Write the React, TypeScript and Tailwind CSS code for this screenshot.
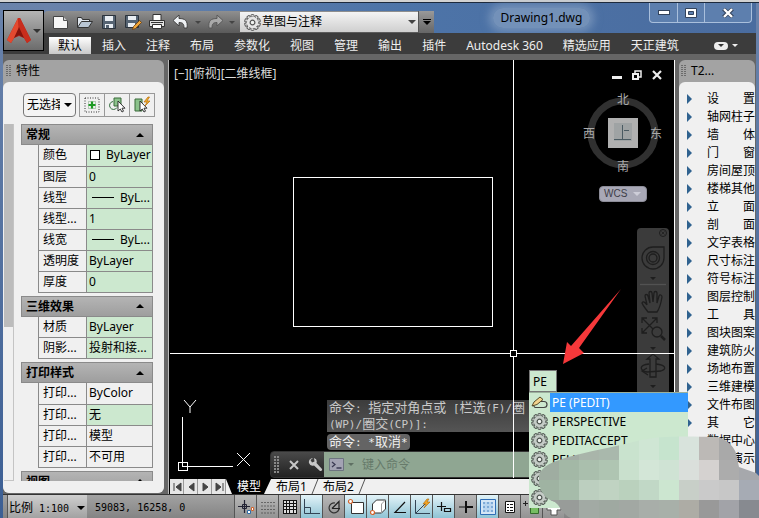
import { useState } from 'react'
import type { ReactNode } from 'react'

const RIBBON_TABS = [
  '默认', '插入', '注释', '布局', '参数化', '视图', '管理', '输出', '插件', 'Autodesk 360', '精选应用', '天正建筑',
]

type Row = { label: string; value: string; kind?: 'swatch' | 'line'; plain?: boolean }

const SECTIONS: { title: string; rows: Row[] }[] = [
  {
    title: '常规',
    rows: [
      { label: '颜色', value: 'ByLayer', kind: 'swatch' },
      { label: '图层', value: '0' },
      { label: '线型', value: 'ByL...', kind: 'line' },
      { label: '线型...', value: '1' },
      { label: '线宽', value: 'ByL...', kind: 'line' },
      { label: '透明度', value: 'ByLayer' },
      { label: '厚度', value: '0' },
    ],
  },
  {
    title: '三维效果',
    rows: [
      { label: '材质', value: 'ByLayer' },
      { label: '阴影...', value: '投射和接...' },
    ],
  },
  {
    title: '打印样式',
    rows: [
      { label: '打印...', value: 'ByColor', plain: true },
      { label: '打印...', value: '无' },
      { label: '打印...', value: '模型', plain: true },
      { label: '打印...', value: '不可用', plain: true },
    ],
  },
  { title: '视图', rows: [] },
]

// Two-character names are spread to the width of four with ideographic spaces.
const TARCH_MENU = [
  '设　　置', '轴网柱子', '墙　　体', '门　　窗', '房间屋顶', '楼梯其他', '立　　面', '剖　　面',
  '文字表格', '尺寸标注', '符号标注', '图层控制', '工　　具', '图块图案', '建筑防火', '场地布置',
  '三维建模', '文件布图', '其　　它', '数据中心', '帮助演示',
]

const SUGGESTIONS = ['PE (PEDIT)', 'PERSPECTIVE', 'PEDITACCEPT', 'PELLIPSE', '', '']

const MOSAIC = [
  ['#a0a8a2', '#a3ada5', '#a9b5aa', '#a9b8ac', '#c9e3ce', '#cfe6d4', '#c6e4ce', '#d8e3dc', '#bcb9b6', '#a9a9a9', '#a5a5a5'],
  ['#9fada1', '#a3b8a6', '#aabfad', '#afc5b2', '#c9e0cd', '#d3e6d7', '#cfe3d4', '#dadfdb', '#d5d2d0', '#acacac', '#a6a8ac'],
  ['#9fb3a2', '#a6bcaa', '#bccfbf', '#c0d3c2', '#bad1bd', '#c1d8c6', '#cce6d0', '#c8cfc8', '#cacaca', '#c7c7c7', '#a6abb4'],
  ['#9b9f9c', '#989c99', '#a2aaa4', '#9fa9a1', '#a2a8a3', '#a8aea9', '#a8b0a9', '#adaca5', '#999999', '#a2a3a8', '#878a90'],
]

const Svg = ({ w = 18, h = 18, children }: { w?: number; h?: number; children: ReactNode }) => (
  <svg width={w} height={h} viewBox={`0 0 ${w} ${h}`} fill="none" className="block shrink-0">
    {children}
  </svg>
)

const Caret = ({ color = '#222', w = 8 }: { color?: string; w?: number }) => (
  <svg width={w} height={w / 2} viewBox="0 0 8 4" className="block shrink-0">
    <path d="M0 0h8L4 4z" fill={color} />
  </svg>
)

function Gear({ size = 17, fill = '#c4cbc6', stroke = '#4c534e' }) {
  const teeth = Array.from({ length: 10 }, (_, i) => i * 36)
  return (
    <svg width={size} height={size} viewBox="-10 -10 20 20" className="block shrink-0">
      {teeth.map((a) => (
        <rect key={a} x="-1.8" y="-9.3" width="3.6" height="4" rx="0.8" fill={fill} stroke={stroke} strokeWidth="1.1" transform={`rotate(${a})`} />
      ))}
      <circle r="6.8" fill={fill} stroke={stroke} strokeWidth="1" strokeDasharray="1.7 2.57" />
      <circle r="6.4" fill={fill} />
      <circle r="2.8" fill="#f1f4f1" stroke={stroke} strokeWidth="1.4" />
    </svg>
  )
}

const QUICK_ICONS: { name: string; icon: ReactNode }[] = [
  {
    name: '新建',
    icon: (
      <Svg>
        <path d="M1.5 3.5h10l4 4v8h-14z" fill="#f6f6f6" stroke="#444" />
        <path d="M11.5 3.5v4h4" fill="#ccc" stroke="#555" />
      </Svg>
    ),
  },
  {
    name: '打开',
    icon: (
      <Svg>
        <path d="M1.5 14.5v-10h4l1 2h7v3" fill="#dfe6ee" stroke="#333" />
        <path d="M1.5 14.5l4-6h11l-4 6z" fill="#b9c6d4" stroke="#333" />
      </Svg>
    ),
  },
  {
    name: '保存',
    icon: (
      <Svg>
        <path d="M2.5 2.5h13v13h-13z" fill="#566473" stroke="#2b333c" />
        <path d="M5 3h8v5H5zM5 11h8v4H5z" fill="#e9eef3" />
        <path d="M6 12h3v3H6z" fill="#566473" />
      </Svg>
    ),
  },
  {
    name: '另存为',
    icon: (
      <Svg>
        <path d="M1.5 2.5h13v12h-13z" fill="#566473" stroke="#2b333c" />
        <path d="M4 3h8v4H4zM4 10h7v4H4z" fill="#e9eef3" />
        <path d="M8.5 16.5l1-3 6-6 2 2-6 6z" fill="#f0a63a" stroke="#6b3d0c" strokeWidth="0.8" />
      </Svg>
    ),
  },
  {
    name: '打印',
    icon: (
      <Svg>
        <path d="M5 7.5V1.5h8v6" fill="#fff" stroke="#333" />
        <path d="M1.5 7.5h15v6h-15z" fill="#e4e4e4" stroke="#333" />
        <path d="M4.5 11.5h9v4h-9z" fill="#fff" stroke="#333" />
        <path d="M3 9.5h12" stroke="#333" />
      </Svg>
    ),
  },
]

function QuickAccess() {
  return (
    <div className="mt-2 flex h-[22px] items-center rounded-tl bg-linear-to-b from-[#8f8f8f] to-[#5a5a5a] pl-2">
      <div className="flex items-center gap-[6px]">
        {QUICK_ICONS.map((q) => (
          <button key={q.name} aria-label={q.name}>{q.icon}</button>
        ))}
        <button aria-label="放弃">
          <Svg>
            <path d="M1 7.5l6-5.5v3.5c6 0 9 2 8 9.5h-3c0-4-1-5.5-5-5.5v3.5z" fill="#eef1f4" stroke="#3a3a3a" strokeWidth="0.9" />
          </Svg>
        </button>
      </div>
      <span className="px-[5px]"><Caret color="#444" w={6} /></span>
      <button aria-label="重做">
        <Svg>
          <path d="M17 7.5l-6-5.5v3.5c-6 0-9 2-8 9.5h3c0-4 1-5.5 5-5.5v3.5z" fill="#a9a9a9" stroke="#555" strokeWidth="0.9" />
        </Svg>
      </button>
      <span className="px-[5px]"><Caret color="#444" w={6} /></span>
      <label className="relative flex h-5 w-[178px] items-center bg-linear-to-b from-[#f4f4f4] to-[#cfcfcf] pl-1">
        <Gear fill="#e6e6e6" stroke="#555" />
        <select aria-label="工作空间" className="ml-px w-full appearance-none bg-transparent text-xs text-black">
          <option>草图与注释</option>
        </select>
        <span className="absolute right-[2px]"><Caret color="#444" w={8} /></span>
      </label>
      <button aria-label="自定义快速访问工具栏" className="flex h-[22px] w-4 flex-col items-center justify-center gap-px border-l border-[#555] bg-linear-to-b from-[#999] to-[#666]">
        <span className="h-px w-2 bg-black" />
        <Caret color="#000" w={8} />
      </button>
    </div>
  )
}

function WindowButtons() {
  return (
    <div className="mr-1 flex h-5 overflow-hidden rounded-b border border-t-0 border-[#a9bfdc] bg-[#5d7fae]">
      <button aria-label="最小化" className="flex w-7 items-center justify-center border-r border-[#a9bfdc]">
        <span className="h-[5px] w-3 border border-[#33435c] bg-white" />
      </button>
      <button aria-label="最大化" className="flex w-[27px] items-center justify-center border-r border-[#a9bfdc]">
        <Svg w={12} h={10}>
          <path d="M.5.5h11v9H.5z" fill="#fff" stroke="#33435c" />
          <path d="M3.5 3.5h5v3h-5z" fill="#5d7fae" stroke="#33435c" />
        </Svg>
      </button>
      <button aria-label="关闭" className="flex w-[46px] items-center justify-center">
        <Svg w={12} h={10}>
          <path d="M1.5 1l9 8M10.5 1l-9 8" stroke="#33435c" strokeWidth="4" />
          <path d="M2 1l8 8M10 1L2 9" stroke="#fff" strokeWidth="2.4" />
        </Svg>
      </button>
    </div>
  )
}

function Header() {
  const [active, setActive] = useState('默认')
  return (
    <header className="flex shrink-0">
      <div className="border-b-[3px] border-[#3c3c3c] pt-[7px]">
        <button aria-label="应用程序菜单" className="flex size-[41px] items-center justify-center gap-[2px] border border-black bg-linear-to-b from-[#b5b5b5] to-[#6c6c6c]">
          <Svg w={24} h={28}>
            <path d="M11 1h2l11 22-4 3-3-5-5-2-5 2-3 5-4-3z" fill="#b5241a" />
            <path d="M11 1L0 23l4 3 3-5 5-8z" fill="#e4492f" />
            <path d="M11 1l1 12 5 8 3 5 4-3L13 1z" fill="#c92d1d" />
            <path d="M12 10l-5 11 5-3 5 3z" fill="#84140d" />
          </Svg>
          <Caret color="#333" w={8} />
        </button>
      </div>
      <div className="flex min-w-0 flex-1 flex-col">
        <div className="flex h-[30px] items-start bg-linear-to-r from-[#6a83ab] via-[#4d74a8] to-[#4a6c9f]">
          <QuickAccess />
          <div className="flex h-[30px] flex-1 items-center justify-center">
            <h1 className="rounded-full bg-[#8ea6c6]/60 px-2 text-xs leading-5 text-black shadow-[0_0_8px_4px_rgba(142,166,198,0.6)]">
              Drawing1.dwg
            </h1>
          </div>
          <WindowButtons />
        </div>
        <nav className="flex h-[21px] items-end gap-[2px] bg-[#3c3c3c] pl-[5px] text-xs text-[#eee]">
          {RIBBON_TABS.map((t) => (
            <button
              key={t}
              onClick={() => setActive(t)}
              className={
                t === active
                  ? 'h-[17px] bg-linear-to-b from-white to-[#c9c9c9] px-[9px] leading-4 whitespace-nowrap text-black'
                  : 'h-[17px] px-[9px] leading-4 whitespace-nowrap'
              }
            >
              {t}
            </button>
          ))}
          <button aria-label="最小化功能区" className="ml-6 flex h-[17px] items-center gap-1">
            <span className="flex h-2 w-[14px] items-center justify-center rounded-sm bg-[#eee]"><Caret color="#333" w={6} /></span>
            <Caret color="#eee" w={6} />
          </button>
        </nav>
      </div>
    </header>
  )
}

const Grip = () => (
  <svg width="5" height="12" viewBox="0 0 5 12" className="block shrink-0">
    <path d="M1 0v12M4 0v12" stroke="#333" strokeDasharray="1 1" />
  </svg>
)

function Section({ title, rows }: { title: string; rows: Row[] }) {
  return (
    <section className="mb-[3px]">
      <button className="flex h-[21px] w-full items-center justify-between border border-[#8a8a8a] bg-linear-to-b from-[#b4b4b4] to-[#9e9e9e] px-1 pr-2 text-xs leading-[19px] font-bold text-black">
        {title}
        <span className="rotate-180"><Caret color="#000" w={8} /></span>
      </button>
      {rows.length > 0 && (
        <div className="pl-[17px]">
          <table className="w-full table-fixed border-collapse text-xs">
            <tbody>
              {rows.map((r, i) => (
                <tr key={i} className="h-[21px]">
                  <th className="w-12 border border-t-0 border-[#8a8a8a] p-0 pl-1 text-left leading-5 font-normal whitespace-nowrap">{r.label}</th>
                  <td className={r.plain ? 'border border-t-0 border-[#8a8a8a] p-0 pl-[2px] leading-5' : 'border border-t-0 border-[#8a8a8a] bg-[#cce8cf] p-0 pl-[2px] leading-5'}>
                    <div className="flex items-center overflow-hidden whitespace-nowrap">
                      {r.kind === 'swatch' && <span className="mr-[6px] ml-px size-[10px] border border-black bg-white" />}
                      {r.kind === 'line' && <span className="mr-[6px] ml-[3px] h-px w-[22px] bg-black" />}
                      {r.value}
                    </div>
                  </td>
                </tr>
              ))}
            </tbody>
          </table>
        </div>
      )}
    </section>
  )
}

function Properties() {
  return (
    <aside className="flex w-[161px] shrink-0 flex-col overflow-hidden rounded-md bg-[#a3a3a3]">
      <div className="flex h-[22px] shrink-0 items-center gap-[5px] pl-[3px] text-xs">
        <Grip />
        <h2>特性</h2>
      </div>
      <div className="flex min-h-0 flex-1 flex-col rounded-t-md bg-[#f0f0f0] pb-3">
        <div className="flex h-[42px] shrink-0 items-center gap-[3px] pt-1 pl-5">
          <label className="relative flex h-6 w-[53px] items-center rounded-sm border border-[#777] bg-[#f4f4f4]">
            <select aria-label="选择对象" className="w-9 appearance-none overflow-hidden pl-[3px] text-xs">
              <option>无选择</option>
            </select>
            <span className="absolute right-[3px]"><Caret color="#000" w={8} /></span>
          </label>
          <div className="flex">
            <button aria-label="切换 PICKADD" className="flex h-6 w-[26px] items-center justify-center border border-[#999]">
              <Svg>
                <path d="M2 2h14v14H2z" stroke="#333" strokeDasharray="1 1.5" />
                <path d="M5.5 5.5h7v7h-7z" stroke="#7aa27a" strokeDasharray="1 1" />
                <path d="M9 5.5v7M5.5 9h7" stroke="#1d9a24" strokeWidth="2.2" />
              </Svg>
            </button>
            <button aria-label="选择对象" className="-ml-px flex h-6 w-[26px] items-center justify-center border border-[#999]">
              <Svg>
                <path d="M6 2h7v8H6z" fill="#8cc28c" stroke="#386b38" />
                <path d="M5 5.5a4 4 0 1 0 4 6" stroke="#2f6a3a" />
                <path d="M10 5v10l2.3-2 1.7 3 1.5-.8-1.5-3h3z" fill="#fff" stroke="#222" strokeWidth="0.9" />
              </Svg>
            </button>
            <button aria-label="快速选择" className="-ml-px flex h-6 w-[26px] items-center justify-center border border-[#999]">
              <Svg>
                <path d="M2 3h7v12H2z" fill="#8cc28c" stroke="#386b38" />
                <path d="M7 5v10l2.3-2 1.7 3 1.5-.8-1.5-3h3z" fill="#fff" stroke="#222" strokeWidth="0.9" />
                <path d="M15 1l-4 5h3l-2 4 5-5h-3l2.5-4z" fill="#f5b02e" stroke="#b56b0a" strokeWidth="0.7" />
              </Svg>
            </button>
          </div>
        </div>
        <div className="flex min-h-0 flex-1 overflow-hidden">
          <div className="mr-[7px] ml-px flex w-[10px] shrink-0 flex-col border-r border-b border-[#c4c4c4]">
            <div className="h-[57%] bg-[#bcbcbc]" />
          </div>
          <div className="min-w-0 flex-1 pr-[11px]">
            {SECTIONS.map((s) => (
              <Section key={s.title} {...s} />
            ))}
          </div>
        </div>
      </div>
    </aside>
  )
}

function TArchMenu() {
  return (
    <aside className="flex w-[76px] shrink-0 flex-col overflow-hidden rounded-t-md bg-[#a3a3a3]">
      <div className="flex h-[22px] shrink-0 items-center gap-[5px] pl-[2px] text-xs">
        <Grip />
        <h2>T2...</h2>
      </div>
      <ul className="min-h-0 flex-1 overflow-hidden rounded-t-md bg-[#f0f0f0] pt-2 pl-2 text-xs">
        {TARCH_MENU.map((m) => (
          <li key={m}>
            <button className="flex h-[18px] items-center gap-[15px] leading-[18px] whitespace-nowrap">
              <svg width="5" height="10" viewBox="0 0 5 10" className="block"><path d="M0 0l5 5-5 5z" fill="#2f628f" /></svg>
              {m}
            </button>
          </li>
        ))}
      </ul>
    </aside>
  )
}

function NavBar() {
  return (
    <div className="absolute top-[168px] right-[5px] w-8 rounded-t bg-[#3b3b3b]">
      <svg width="32" height="168" viewBox="0 0 32 168" fill="none" stroke="#1e1e1e" strokeWidth="1.3" className="block">
        <circle cx="26" cy="5" r="3.5" strokeWidth="1" />
        <path d="M24.5 3.5l3 3M27.5 3.5l-3 3" strokeWidth="0.8" />
        <path d="M27 19v11a11 11 0 1 1-11-11z" />
        <circle cx="16" cy="30" r="6.5" />
        <circle cx="16" cy="30" r="4" />
        <path d="M13 49h6l-3 3zM13 119h6l-3 3zM13 157h6l-3 3z" fill="#1e1e1e" stroke="none" />
        <path d="M3 56.5h26" stroke="#525252" />
        <path d="M11 84c-2-3-5-6-6-9 1-2 3-1 5 2l-2-9c0-2 2.5-2 3 0l2 7-1-10c0-2 3-2 3 0l1 9 1-9c0-2 3-2 3 0v10l2-7c1-2 3-1 3 1-1 6-2 11-5 15z" />
        <path d="M5 90l17 17M20 90L5 105M5 95v-5h5M15 90h5v5M5 100v5h5" />
        <circle cx="20" cy="104" r="5" fill="#3b3b3b" />
        <path d="M24 108l4 4" strokeWidth="2.5" />
        <path d="M13 149v-18h-3l6-5 6 5h-3v18z" />
        <path d="M12 136c-10 1-10 6-2 8l14-1c6-2 5-6-5-7M10 140l-5 3 6 4" />
      </svg>
    </div>
  )
}

function ViewCube() {
  return (
    <div className="absolute top-8 right-[12px] h-[112px] w-20 text-xs text-[#aaa]">
      <svg width="80" height="80" viewBox="0 0 80 80" className="block">
        <circle cx="41" cy="41" r="32" fill="none" stroke="#303030" strokeWidth="7" />
        <path d="M26 26h30v30H26z" fill="#b0b0b0" />
        <path d="M32 31h18v18H32z" fill="#9fa3a4" />
        <path d="M40.5 33v14M42 38.5h5M32 47.5h17" stroke="#4a5a62" />
      </svg>
      <span className="absolute top-0 left-[35px] leading-4">北</span>
      <span className="absolute top-[34px] left-px leading-4">西</span>
      <span className="absolute top-[34px] right-0 leading-4">东</span>
      <span className="absolute top-[67px] left-[35px] leading-4">南</span>
      <button className="absolute top-[94px] left-[17px] flex h-4 w-12 items-center gap-[6px] rounded-sm border border-[#8d8d99] bg-[#a8a8b6] pl-1 font-['Liberation_Sans',sans-serif] text-[10px] text-[#3d3d48]">
        WCS
        <Caret color="#cdcdd8" w={8} />
      </button>
    </div>
  )
}

function CommandLine() {
  return (
    <div className="absolute right-2 bottom-0 left-[100px]">
      <div className="ml-[57px] font-['DejaVu_Sans_Mono','Noto_Sans_CJK_SC',monospace] text-[13px] leading-[15px] text-[#c9c9c9]">
        <p className="mb-[2px] w-[202px] bg-linear-to-b from-[#3c3c3c] to-[#555] pl-[2px] whitespace-nowrap">
          命令<span className="text-[11px]">: </span>指定对角点或<span className="text-[11px]"> [</span>栏选
          <span className="text-[11px]">(F)/</span>圈
          <br />
          <span className="text-[11px]">(WP)/</span>圈交<span className="text-[11px]">(CP)]:</span>
        </p>
        <p className="mb-px w-fit rounded-sm bg-[#646464] px-[2px] text-[#eee]">
          命令<span className="text-[11px]">: *</span>取消<span className="text-[11px]">*</span>
        </p>
      </div>
      <div className="flex h-[27px] overflow-hidden rounded-l border border-[#333] bg-linear-to-b from-[#4a4a4a] to-[#222]">
        <div className="flex w-[53px] shrink-0 items-center gap-[9px] pl-[3px]">
          <svg width="6" height="18" viewBox="0 0 6 18" className="block"><path d="M1 0v18M4 0v18" stroke="#888" strokeWidth="2" strokeDasharray="2 1" /></svg>
          <button aria-label="关闭命令行"><Svg w={10} h={10}><path d="M1 1l8 8M9 1L1 9" stroke="#c8c8c8" strokeWidth="2" /></Svg></button>
          <button aria-label="自定义">
            <Svg w={15} h={15}>
              <path d="M5 1a4 4 0 0 0-4 5 4 4 0 0 0 5 2.5l6 5.5c1.5.5 2.5-1 2-2L8.500 6A4 4 0 0 0 6 1l.5 3.5L4 5.5 2.500 3z" fill="#c8c8c8" />
            </Svg>
          </button>
        </div>
        <label className="flex min-w-0 flex-1 items-center bg-[#8fa692] pl-[5px]">
          <Svg w={15} h={14}>
            <path d="M.5.5h14v12H.5z" fill="#a3a3b4" stroke="#6d7480" />
            <path d="M3 4l3 2.500L3 9M7.500 10h5" stroke="#3c3c55" strokeWidth="1.3" />
          </Svg>
          <span className="ml-1"><Caret color="#5f7063" w={6} /></span>
          <input aria-label="命令" placeholder="键入命令" className="ml-2 min-w-0 flex-1 bg-transparent text-xs outline-none placeholder:text-[#667a6a]" />
        </label>
      </div>
    </div>
  )
}

function Autocomplete() {
  return (
    <div className="absolute top-[310px] left-[360px] z-20 w-[159px] text-xs text-black">
      <input aria-label="动态输入" defaultValue="PE" className="block h-[22px] w-7 border border-[#777] bg-[#cce8cf] pl-[3px] outline-none" />
      <ul className="border-t border-[#9ab09c] bg-[#cce8cf] pb-px">
        {SUGGESTIONS.map((s, i) => (
          <li key={i} className="flex h-[19px] items-center pl-[2px]">
            {i === 0 ? (
              <Svg w={17} h={17}>
                <path d="M5 13.500h8c4 0 4-6 0-6h-3M2 11l2 2.500h3" stroke="#444" strokeWidth="1.2" />
                <path d="M1 12l2-4 6-5 3 2.500-6 5z" fill="#f2d38e" stroke="#4a3a18" strokeWidth="0.9" />
              </Svg>
            ) : (
              <Gear />
            )}
            <span className={i === 0 ? 'ml-[2px] h-[19px] flex-1 bg-[#3399ff] pl-[2px] leading-[19px] text-white' : 'ml-[2px] flex-1 pl-[2px] leading-[19px]'}>{s}</span>
          </li>
        ))}
      </ul>
    </div>
  )
}

function Viewport() {
  return (
    <div className="relative min-h-0 flex-1 overflow-hidden bg-black">
      <p className="absolute top-[5px] left-1 text-xs leading-[18px] text-[#ddd]">[−][俯视][二维线框]</p>
      <div className="absolute top-[10px] right-3 flex items-center gap-[10px]">
        <button aria-label="最小化视口" className="mt-1 h-[3px] w-[10px] bg-[#eee]" />
        <button aria-label="还原视口">
          <Svg w={10} h={10}>
            <path d="M3 3V1h6v6H7" stroke="#eee" strokeWidth="1.5" />
            <path d="M1 4h5v5H1z" stroke="#eee" strokeWidth="2" />
          </Svg>
        </button>
        <button aria-label="关闭视口">
          <Svg w={10} h={10}><path d="M1 1l8 8M9 1L1 9" stroke="#eee" strokeWidth="2.2" /></Svg>
        </button>
      </div>
      <ViewCube />
      <NavBar />
      <CommandLine />
      <svg className="pointer-events-none absolute inset-0 size-full" fill="none" stroke="#fff" shapeRendering="crispEdges">
        <rect x="123.5" y="117.5" width="199" height="149" />
        <path d="M343.5 0v290M343.5 297v400M0 293.5h340M347 293.5h1200" />
        <rect x="340.5" y="290.5" width="6" height="6" />
        <path d="M12.5 357v49h50M8.5 402.5h9v8h-9z" />
        <g shapeRendering="auto">
          <path d="M14 340l6 7 6-7M20 347v6M67 393l13 13M80 393l-13 13" />
        </g>
      </svg>
      <svg width="60" height="80" viewBox="0 0 60 80" className="absolute top-[228px] left-[392px]">
        <path d="M59 1L17 60l5 5-21 11 4-22 4 4z" fill="#f5383a" />
      </svg>
    </div>
  )
}

const PAGE_ARROWS = ['M3 1v8M10 1L5 5l5 4z', 'M9 1L4 5l5 4z', 'M4 1l5 4-5 4z', 'M3 1l5 4-5 4zM10 1v8']

function LayoutTabs() {
  return (
    <div className="flex h-4 shrink-0 border-t border-black bg-[#f0f0f0] text-xs text-black">
      {PAGE_ARROWS.map((d, i) => (
        <button key={d} aria-label={`布局翻页 ${i + 1}`} className="flex w-[14px] items-center justify-center border-r border-[#999] bg-[#e6e6e6]">
          <Svg w={12} h={10}><path d={d} fill="#444" stroke="#444" /></Svg>
        </button>
      ))}
      <Svg w={8} h={15}><path d="M0 0h8v15H6z" fill="#000" /></Svg>
      <button className="bg-black px-[3px] leading-[15px] text-white">模型</button>
      <Svg w={8} h={15}><path d="M0 0h7L0 15z" fill="#000" /></Svg>
      <button className="px-1 leading-[15px]">布局1</button>
      <Svg w={8} h={15}><path d="M1 15L7 0" stroke="#555" /></Svg>
      <button className="px-1 leading-[15px]">布局2</button>
      <Svg w={8} h={15}><path d="M1 15L7 0" stroke="#555" /></Svg>
    </div>
  )
}

const TOGGLES: { name: string; on: boolean; icon: ReactNode }[] = [
  { name: '推断约束', on: false, icon: <><path d="M1 8.5h12M7.5 2v13" stroke="#223" strokeWidth="1.2" /><path d="M5.5 6.5h4v4h-4z" stroke="#223" /><path d="M10.5 12.5h3v3h-3z" stroke="#2f6da8" fill="#fff" /><path d="M14.5 9.5h2v3h-2z" stroke="#d2622a" fill="#fff" /></> },
  { name: '捕捉', on: false, icon: <path d="M3 4v12M6 4v12M9 4v12M12 4v12M15 4v12" stroke="#222" strokeDasharray="1 2.5" /> },
  { name: '栅格', on: false, icon: <><path d="M2 2h14v14H2z" fill="#ddd" /><path d="M2 2.5h14M2 5.5h14M2 8.5h14M2 11.5h14M2 15.5h14M2.5 2v14M5.5 2v14M8.5 2v14M12.5 2v14M15.5 2v14" stroke="#111" /></> },
  { name: '正交', on: true, icon: <path d="M1.5 1v14.5H17M1.5 9.5h6v6" stroke="#345" /> },
  { name: '极轴', on: false, icon: <><path d="M14 11a5 5 0 1 1-4-6" stroke="#333" strokeWidth="1.2" /><path d="M7 10.5h8M7 10.5l7-7v8" stroke="#222" strokeWidth="1.2" /></> },
  { name: '对象捕捉', on: true, icon: <><path d="M4.5 4.5h12v11h-12z" fill="#fff" stroke="#333" /><circle cx="3.5" cy="3.5" r="2" fill="#fff" stroke="#d2622a" strokeWidth="1.2" /></> },
  { name: '三维对象捕捉', on: true, icon: <><path d="M3.5 6l4-4h9v9l-4 4h-9z" fill="#fff" stroke="#333" /><path d="M12.5 6l4-4M12.5 6v9" stroke="#999" /><circle cx="3.5" cy="14.5" r="2" fill="#fff" stroke="#d2622a" strokeWidth="1.2" /></> },
  { name: '对象追踪', on: true, icon: <path d="M14 4L4 14.5h11" stroke="#111" strokeWidth="1.2" /> },
  { name: '动态 UCS', on: true, icon: <><path d="M2.5 2v13.5H17M3 15L12 6" stroke="#345" /><path d="M14 1l-4 5h3l-2 4 6-6h-3l2-3z" fill="#f5a623" stroke="#a6640c" strokeWidth="0.6" /></> },
  { name: '动态输入', on: true, icon: <path d="M2 8.500h9M6.500 4v9M9.500 10.500h6v3h-6z" stroke="#111" strokeWidth="1.2" /> },
  { name: '线宽', on: false, icon: <><path d="M2 9h8" stroke="#111" /><path d="M9 9h7M9 3v12" stroke="#111" strokeWidth="2" /></> },
  { name: '透明度', on: true, icon: <><path d="M1.5 1.5h15v15h-15z" fill="#d5e6f6" stroke="#2f6db5" /><path d="M4 4h10v10H4z" fill="#b9d5f0" /><path d="M4 5h10M4 9h10M4 13h10" stroke="#7fabd8" strokeWidth="2" strokeDasharray="2 2" /></> },
  { name: '快捷特性', on: false, icon: <><path d="M4.5 3.5h9v11h-9z" fill="#fff" stroke="#111" /><path d="M6 6.500h2M9 6.500h3M6 9.500h2M9 9.500h3M6 12.500h2M9 12.500h3" stroke="#111" /></> },
  { name: '选择循环', on: false, icon: <><path d="M0 5.500h5M2.500 3v5" stroke="#222" /><path d="M7.500 7.500h8v8h-8z" fill="#76bd62" stroke="#356b2a" /></> },
  { name: '注释监视器', on: false, icon: <path d="M6 2h6v5h4v5h-4v5H6v-5H2V7h4z" fill="#fff" stroke="#555" /> },
]

function StatusBar() {
  return (
    <footer className="flex h-[23px] shrink-0 bg-linear-to-b from-[#a2a2a2] to-[#848484] pl-1 text-xs text-black">
      <button className="flex w-20 items-center gap-2 border-l border-[#555] bg-linear-to-b from-[#cfcfcf] to-[#a2a2a2] pt-[2px] pl-px whitespace-nowrap">
        <span>
          比例<span className="ml-[6px] font-['DejaVu_Sans_Mono',monospace] text-[10px]">1:100</span>
        </span>
        <Caret color="#000" w={8} />
      </button>
      <output className="flex w-[147px] items-center pt-[2px] pl-2 font-['DejaVu_Sans_Mono',monospace] text-[10px] whitespace-nowrap">
        59083, 16258, 0
      </output>
      {TOGGLES.map((t) => (
        <button
          key={t.name}
          aria-label={t.name}
          aria-pressed={t.on}
          className={
            t.on
              ? 'flex w-[22px] items-center justify-center border-l border-[#555] bg-linear-to-b from-[#e2f3f8] to-[#8fc3d4]'
              : 'flex w-[22px] items-center justify-center border-l border-[#555] bg-linear-to-b from-[#b8b8b8] to-[#939393]'
          }
        >
          <Svg>{t.icon}</Svg>
        </button>
      ))}
    </footer>
  )
}

// Pixelated blot laid over the lower right corner of the window.
function Mosaic() {
  return (
    <svg width="220" height="82" viewBox="0 0 220 82" className="pointer-events-none absolute right-0 bottom-0 z-30">
      <clipPath id="blot">
        <path d="M0 39c4-10 14-13 26-17 24-7 50-11 76-18 18-4 42-4 76-3 8 1 16 8 19 16l3 14 17 6 3 3v42H32c-8-3-10-11-16-16C4 63-2 50 0 39z" />
      </clipPath>
      <g clipPath="url(#blot)" shapeRendering="crispEdges">
        {MOSAIC.map((row, r) =>
          row.map((c, i) => (
            <rect key={`${r}-${i}`} x={i * 20} y={r === 0 ? 0 : r * 20 + 4} width="20" height="24" fill={c} />
          ))
        )}
      </g>
    </svg>
  )
}

export default function App() {
  return (
    <div className="relative flex h-screen w-full flex-col overflow-hidden bg-[#d2d2d2] pt-[2px] font-['Noto_Sans','Noto_Sans_CJK_SC',sans-serif]">
      <div className="flex min-h-0 flex-1 flex-col border-t border-[#1d2a3d] bg-linear-to-b from-[#6a83ab] to-[#3c5f94] pr-[3px] pl-[3px]">
        <Header />
        <main className="flex min-h-0 flex-1 border-b border-[#333] bg-[#666] pt-[6px] pr-px">
          <div className="flex pb-px">
            <Properties />
          </div>
          <div className="ml-[4px] flex min-w-0 flex-1 border-l border-[#bbb]">
            <div className="relative flex min-w-0 flex-1 flex-col border-r border-white">
              <div className="flex min-h-0 flex-1 flex-col border-l border-black">
                <Viewport />
                <LayoutTabs />
              </div>
              <Autocomplete />
            </div>
          </div>
          <div className="ml-1 flex">
            <TArchMenu />
          </div>
        </main>
        <StatusBar />
      </div>
      <Mosaic />
    </div>
  )
}
